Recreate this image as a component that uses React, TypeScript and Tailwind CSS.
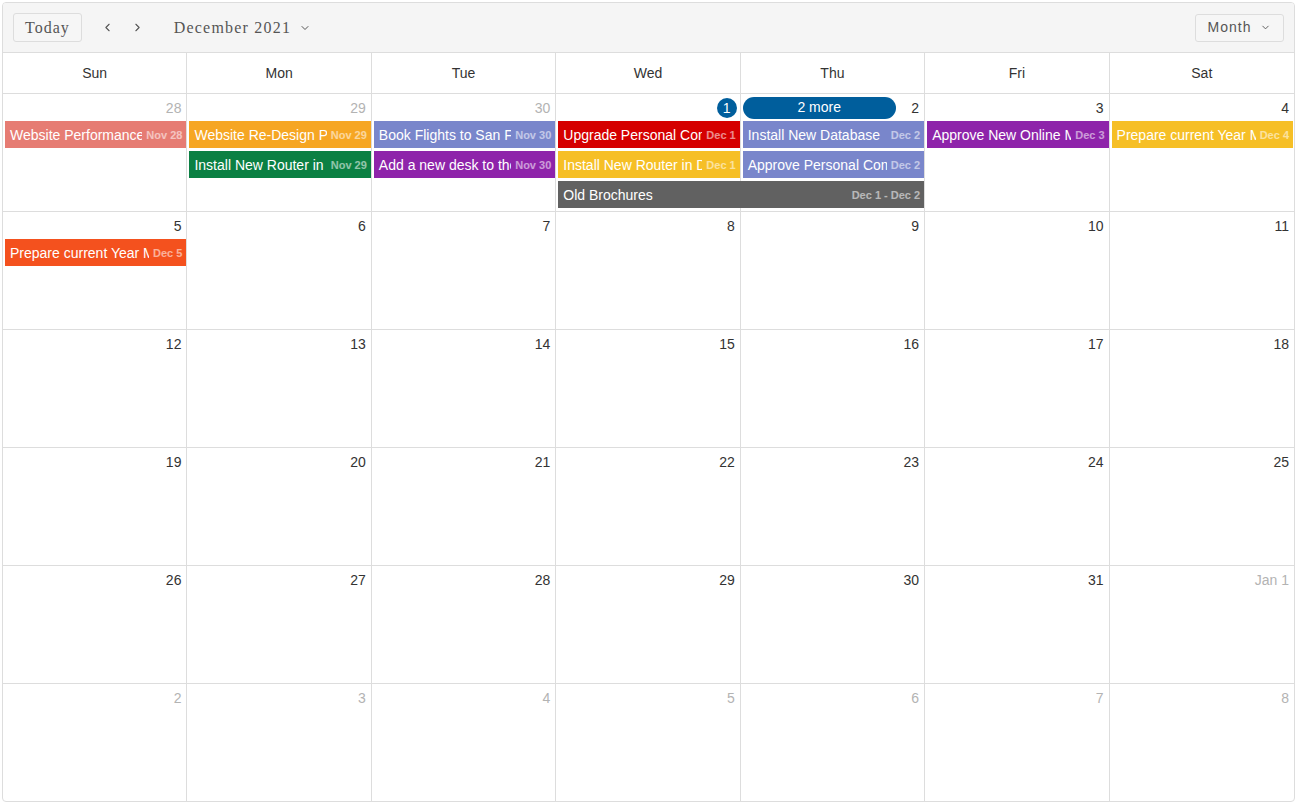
import { ChevronDown, ChevronLeft, ChevronRight } from 'lucide-react'

type Day = { label: string; muted?: boolean; today?: boolean; more?: string }

type CalEvent = {
  title: string
  when: string
  col: string
  row: string
  color: string
}

const dayNames = ['Sun', 'Mon', 'Tue', 'Wed', 'Thu', 'Fri', 'Sat']

const colStart = ['col-start-1', 'col-start-2', 'col-start-3', 'col-start-4', 'col-start-5', 'col-start-6', 'col-start-7']

const weeks: Day[][] = [
  [
    { label: '28', muted: true },
    { label: '29', muted: true },
    { label: '30', muted: true },
    { label: '1', today: true },
    { label: '2', more: '2 more' },
    { label: '3' },
    { label: '4' },
  ],
  ['5', '6', '7', '8', '9', '10', '11'].map((label) => ({ label })),
  ['12', '13', '14', '15', '16', '17', '18'].map((label) => ({ label })),
  ['19', '20', '21', '22', '23', '24', '25'].map((label) => ({ label })),
  [
    ...['26', '27', '28', '29', '30', '31'].map((label) => ({ label })),
    { label: 'Jan 1', muted: true },
  ],
  ['2', '3', '4', '5', '6', '7', '8'].map((label) => ({ label, muted: true })),
]

const weekEvents: CalEvent[][] = [
  [
    { title: 'Website Performance Test', when: 'Nov 28', col: 'col-start-1', row: 'row-start-2', color: 'bg-[#e67c73]' },
    { title: 'Website Re-Design Plan', when: 'Nov 29', col: 'col-start-2', row: 'row-start-2', color: 'bg-[#f6a623]' },
    { title: 'Install New Router in Dev Room', when: 'Nov 29', col: 'col-start-2', row: 'row-start-3', color: 'bg-[#0b8043]' },
    { title: 'Book Flights to San Fransisco for Sales Trip', when: 'Nov 30', col: 'col-start-3', row: 'row-start-2', color: 'bg-[#7986cb]' },
    { title: 'Add a new desk to the Dev Room', when: 'Nov 30', col: 'col-start-3', row: 'row-start-3', color: 'bg-[#8e24aa]' },
    { title: 'Upgrade Personal Computers', when: 'Dec 1', col: 'col-start-4', row: 'row-start-2', color: 'bg-[#d50000]' },
    { title: 'Install New Router in Dev Room', when: 'Dec 1', col: 'col-start-4', row: 'row-start-3', color: 'bg-[#f6bf26]' },
    { title: 'Old Brochures', when: 'Dec 1 - Dec 2', col: 'col-start-4 col-span-2', row: 'row-start-4', color: 'bg-[#616161]' },
    { title: 'Install New Database', when: 'Dec 2', col: 'col-start-5', row: 'row-start-2', color: 'bg-[#7986cb]' },
    { title: 'Approve Personal Computer Upgrade Plan', when: 'Dec 2', col: 'col-start-5', row: 'row-start-3', color: 'bg-[#7986cb]' },
    { title: 'Approve New Online Marketing Strategy', when: 'Dec 3', col: 'col-start-6', row: 'row-start-2', color: 'bg-[#8e24aa]' },
    { title: 'Prepare current Year Market Analysis', when: 'Dec 4', col: 'col-start-7', row: 'row-start-2', color: 'bg-[#f6bf26]' },
  ],
  [
    { title: 'Prepare current Year Market Analysis', when: 'Dec 5', col: 'col-start-1', row: 'row-start-2', color: 'bg-[#f4511e]' },
  ],
  [],
  [],
  [],
  [],
]

function EventBar({ ev }: { ev: CalEvent }) {
  return (
    <div
      className={`${ev.col} ${ev.row} ${ev.color} z-10 ml-[2px] mr-[1px] flex h-[27px] items-center overflow-hidden text-white`}
    >
      <span className="min-w-0 flex-1 overflow-hidden whitespace-nowrap pl-[5px] pt-[1px] text-[14px] leading-[27px]">
        {ev.title}
      </span>
      <span className="shrink-0 pl-[4px] pr-[4px] pt-[2px] text-[11px] font-bold text-white/55">{ev.when}</span>
    </div>
  )
}

function Week({ days, events, last }: { days: Day[]; events: CalEvent[]; last: boolean }) {
  return (
    <div
      className={`grid min-h-0 flex-1 grid-cols-7 grid-rows-[27px_30px_30px_30px_1fr] ${last ? '' : 'border-b border-[#ddd]'}`}
    >
      {days.map((d, i) => (
        <div
          key={i}
          className={`${colStart[i]} row-span-full flex flex-col pr-[5px] ${i < 6 ? 'border-r border-[#ddd]' : ''}`}
        >
          <div className="flex h-[27px] w-full shrink-0 items-center">
            {d.more && (
              <div className="ml-[2px] flex h-[22px] w-[153px] items-center justify-center rounded-full bg-[#005e9c] text-[14px] text-white">
                {d.more}
              </div>
            )}
            <div className="flex-1" />
            {d.today ? (
              <span className="-mr-[2px] flex h-[20px] w-[20px] items-center justify-center rounded-full bg-[#005e9c] pt-[1px] text-[14px] text-white">
                {d.label}
              </span>
            ) : (
              <span className={`pt-[1px] text-[14px] ${d.muted ? 'text-[#b3b3b3]' : 'text-[#333]'}`}>{d.label}</span>
            )}
          </div>
        </div>
      ))}
      {events.map((ev, i) => (
        <EventBar key={i} ev={ev} />
      ))}
    </div>
  )
}

export default function App() {
  return (
    <div className="h-[804px] w-[1297px] bg-white p-[2px] font-['Liberation_Sans',Arial,sans-serif]">
      <div className="flex h-full flex-col overflow-hidden rounded-[4px] border border-[#ddd]">
        <div className="flex h-[50px] shrink-0 items-center justify-between border-b border-[#ddd] bg-[#f5f5f5] px-[10px]">
          <div className="flex items-center">
            <button className="h-[29px] rounded-[3px] border border-[#ddd] bg-[#f6f6f6] px-[11px] font-['Liberation_Serif',serif] text-[16px] tracking-[1px] text-[#555]">
              Today
            </button>
            <ChevronLeft size={13} strokeWidth={2} className="ml-[19px] text-[#555]" />
            <ChevronRight size={13} strokeWidth={2} className="ml-[17px] text-[#555]" />
            <div className="ml-[30px] flex items-center font-['Liberation_Serif',serif] text-[16px] tracking-[1.2px] text-[#555]">
              December 2021
              <ChevronDown size={12} strokeWidth={2} className="ml-[8px] text-[#555]" />
            </div>
          </div>
          <button className="flex h-[28px] w-[89px] items-center justify-center rounded-[3px] border border-[#ddd] bg-[#f6f6f6] text-[14px] tracking-[1px] text-[#555]">
            Month
            <ChevronDown size={11} strokeWidth={2} className="ml-[9px] text-[#555]" />
          </button>
        </div>

        <div className="grid h-[41px] shrink-0 grid-cols-7 border-b border-[#ddd]">
          {dayNames.map((n, i) => (
            <div
              key={n}
              className={`flex items-center justify-center text-[14px] text-[#333] ${i < 6 ? 'border-r border-[#ddd]' : ''}`}
            >
              {n}
            </div>
          ))}
        </div>

        <div className="flex min-h-0 flex-1 flex-col">
          {weeks.map((days, i) => (
            <Week key={i} days={days} events={weekEvents[i]} last={i === weeks.length - 1} />
          ))}
        </div>
      </div>
    </div>
  )
}
